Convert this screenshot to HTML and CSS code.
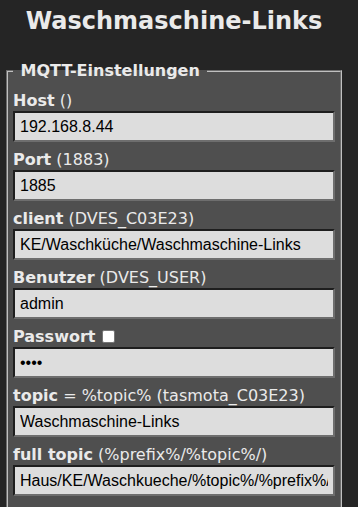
FILE: index.html
```html
<!DOCTYPE html>
<html lang="de">
<head>
<meta charset="utf-8">
<title>Waschmaschine-Links</title>
<link rel="stylesheet" href="styles.css">
</head>
<body>
<div class="main">
  <h2 class="title">Waschmaschine-Links</h2>
  <fieldset class="box">
    <legend class="legend"><b>&nbsp;MQTT-Einstellungen&nbsp;</b></legend>
    <p class="row"><b>Host</b> ()<br><input class="field" value="192.168.8.44"></p>
    <p class="row"><b>Port</b> (1883)<br><input class="field" value="1885"></p>
    <p class="row"><b>client</b> (DVES_C03E23)<br><input class="field" value="KE/Waschküche/Waschmaschine-Links"></p>
    <p class="row"><b>Benutzer</b> (DVES_USER)<br><input class="field" value="admin"></p>
    <p class="row"><b>Passwort</b> <input class="check" type="checkbox"><br><input class="field" type="password" value="1234"></p>
    <p class="row"><b>topic</b> = %topic% (tasmota_C03E23)<br><input class="field" value="Waschmaschine-Links"></p>
    <p class="row"><b>full topic</b> (%prefix%/%topic%/)<br><input class="field" value="Haus/KE/Waschkueche/%topic%/%prefix%/"></p>
  </fieldset>
</div>
</body>
</html>
```

FILE: styles.css
```css
html, body {
  margin: 0;
  padding: 0;
  background: #252525;
}
body {
  font-family: "DejaVu Sans", Verdana, sans-serif;
  font-size: 16px;
  color: #eaeaea;
}
.main {
  width: 340px;
  margin-left: 4px;
}
.title {
  margin: 7px 0 0;
  text-align: center;
  font-size: 24px;
  font-weight: bold;
  line-height: 28px;
  height: 28px;
}
.box {
  margin: 26px 2px 0;
  padding: 3px 5px 5px;
  background: #4f4f4f;
  border: 2px groove #c0c0c0;
  min-width: 0;
}
.legend {
  padding: 0 2px;
  font-size: 16px;
  line-height: 19px;
}
.row {
  margin: 8px 0;
  line-height: 20px;
}
.field {
  display: block;
  width: 100%;
  height: 31px;
  box-sizing: border-box;
  margin: 0;
  padding: 5px;
  font-family: "Liberation Sans", Arial, sans-serif;
  font-size: 16px;
  color: #000;
  background: #dddddd;
  border-style: solid;
  border-width: 2px;
  border-color: #1e1e1e #6e6e6e #6e6e6e #1e1e1e;
  outline: none;
}
.check {
  -webkit-appearance: none;
  appearance: none;
  width: 13px;
  height: 13px;
  margin: 0 0 0 1px;
  padding: 0;
  vertical-align: -1px;
  background: #fff;
  border: 1px solid #767676;
  border-radius: 2px;
  box-sizing: border-box;
}
```
